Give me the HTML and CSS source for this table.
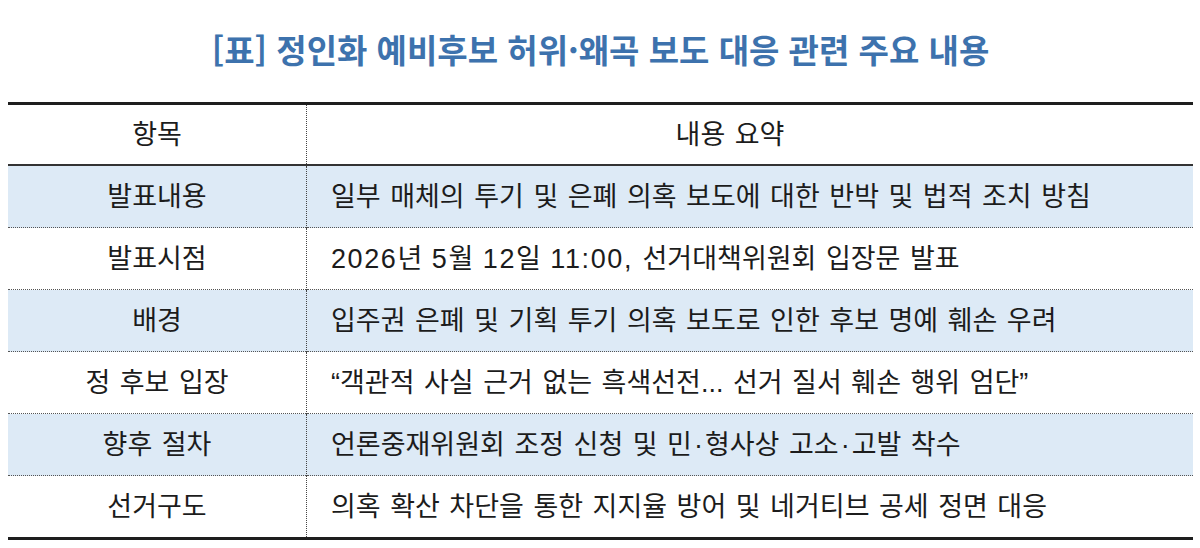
FILE: index.html
```html
<!DOCTYPE html>
<html lang="ko">
<head>
<meta charset="utf-8">
<title>정인화 예비후보 허위·왜곡 보도 대응</title>
<link rel="stylesheet" href="styles.css">
</head>
<body>
<div class="page">
  <h1 class="title">[표] 정인화 예비후보 허위·왜곡 보도 대응 관련 주요 내용</h1>
  <table class="tbl">
    <thead>
      <tr>
        <th class="c1">항목</th>
        <th class="c2">내용 요약</th>
      </tr>
    </thead>
    <tbody>
      <tr class="blue">
        <td class="c1">발표내용</td>
        <td class="c2">일부 매체의 투기 및 은폐 의혹 보도에 대한 반박 및 법적 조치 방침</td>
      </tr>
      <tr>
        <td class="c1">발표시점</td>
        <td class="c2"><span class="num">2026</span>년 <span class="num">5</span>월 <span class="num">12</span>일 <span class="num">11:00,</span> 선거대책위원회 입장문 발표</td>
      </tr>
      <tr class="blue">
        <td class="c1">배경</td>
        <td class="c2">입주권 은폐 및 기획 투기 의혹 보도로 인한 후보 명예 훼손 우려</td>
      </tr>
      <tr>
        <td class="c1">정 후보 입장</td>
        <td class="c2">“객관적 사실 근거 없는 흑색선전... 선거 질서 훼손 행위 엄단”</td>
      </tr>
      <tr class="blue">
        <td class="c1">향후 절차</td>
        <td class="c2">언론중재위원회 조정 신청 및 민<span class="dot">·</span>형사상 고소<span class="dot">·</span>고발 착수</td>
      </tr>
      <tr class="last">
        <td class="c1">선거구도</td>
        <td class="c2">의혹 확산 차단을 통한 지지율 방어 및 네거티브 공세 정면 대응</td>
      </tr>
    </tbody>
  </table>
</div>
</body>
</html>
```

FILE: styles.css
```css
html, body {
  margin: 0;
  padding: 0;
  background: #ffffff;
}

.page {
  width: 1200px;
  padding: 26px 0 0 8px;
  box-sizing: border-box;
  font-family: "Noto Sans CJK KR", "Noto Sans", sans-serif;
  color: #1c1c1c;
}

.title {
  margin: 0 0 30px 0;
  width: 1185px;
  text-align: center;
  font-size: 33px;
  line-height: 46px;
  font-weight: 700;
  color: #3d72ad;
}

.tbl {
  width: 1185px;
  border-collapse: collapse;
  border-top: 3px solid #1e1e1e;
  border-bottom: 3px solid #1e1e1e;
  font-family: "Liberation Sans", "Noto Sans CJK KR", sans-serif;
  font-size: 27px;
  word-spacing: 2px;
}

.tbl th,
.tbl td {
  font-weight: 400;
  padding: 0;
  height: 61px;
  line-height: 36px;
  vertical-align: middle;
  border-top: 1px dotted #555;
}

.tbl th {
  height: 59px;
  border-top: none;
  border-bottom: 2px solid #333;
}

.tbl tbody tr:first-child td {
  border-top: 1px solid #8a8a8a;
}

.c1 {
  width: 298px;
  text-align: center;
  border-right: 1px dotted #444;
}

.c2 {
  text-align: left;
  padding-left: 24px !important;
}

.tbl th.c2 {
  text-align: center;
  padding-left: 0 !important;
  padding-right: 40px !important;
}

.num {
  letter-spacing: 1.6px;
}

.dot {
  margin: 0 2px;
}

.blue td {
  background: #ddeaf6;
}
```
